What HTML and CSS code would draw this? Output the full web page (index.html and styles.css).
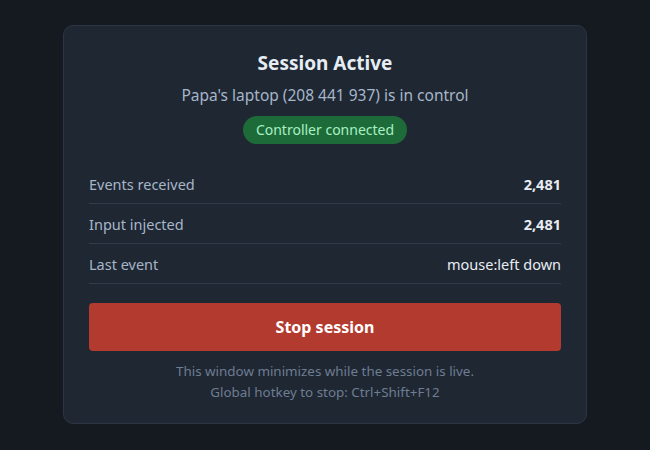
FILE: index.html
```html
<!DOCTYPE html>
<html lang="en">
<head>
<meta charset="utf-8">
<title>Session Active</title>
<link rel="stylesheet" href="styles.css">
</head>
<body>
<main class="card">
  <h1 class="title">Session Active</h1>
  <p class="subtitle">Papa's laptop (208 441 937) is in control</p>
  <div class="badge-wrap"><span class="badge">Controller connected</span></div>
  <div class="stats">
    <div class="row"><span class="label">Events received</span><span class="value strong">2,481</span></div>
    <div class="row"><span class="label">Input injected</span><span class="value strong">2,481</span></div>
    <div class="row"><span class="label">Last event</span><span class="value">mouse:left down</span></div>
  </div>
  <button class="stop">Stop session</button>
  <p class="note">This window minimizes while the session is live.<br>Global hotkey to stop: Ctrl+Shift+F12</p>
</main>
</body>
</html>
```

FILE: styles.css
```css
* { box-sizing: border-box; }
html, body { margin: 0; padding: 0; }
body {
  background: #151a21;
  font-family: "Noto Sans", "Open Sans", sans-serif;
  height: 450px;
  padding-top: 25px;
}
.card {
  width: 524px;
  height: 399px;
  margin: 0 auto;
  background: #1f2733;
  border: 1px solid #2c3543;
  border-radius: 10px;
  padding: 23px 25px 20px;
  display: flex;
  flex-direction: column;
}
.title {
  margin: 0;
  text-align: center;
  font-size: 19px;
  line-height: 28px;
  font-weight: 700;
  color: #e6edf3;
}
.subtitle {
  margin: 7px 0 0;
  text-align: center;
  font-size: 15.5px;
  line-height: 22px;
  color: #a6b6c9;
}
.badge-wrap {
  display: flex;
  justify-content: center;
  margin-top: 10px;
}
.badge {
  background: #1e6b3a;
  color: #a9f0c3;
  font-size: 14px;
  line-height: 28px;
  height: 28px;
  padding: 0 13px;
  border-radius: 14px;
}
.stats { margin-top: 20px; }
.row {
  display: flex;
  justify-content: space-between;
  align-items: center;
  height: 40px;
  border-bottom: 1px solid #313b49;
  font-size: 14.5px;
}
.label { color: #a6b6c9; }
.value { color: #e8edf2; }
.value.strong { font-weight: 700; }
.stop {
  margin-top: 19px;
  height: 48px;
  width: 100%;
  border: 0;
  border-radius: 4px;
  background: #b23a2f;
  color: #ffffff;
  font-family: inherit;
  font-size: 16px;
  font-weight: 700;
}
.note {
  margin: 10px 0 0;
  text-align: center;
  font-size: 13.4px;
  line-height: 21px;
  color: #6e7d91;
}
```
